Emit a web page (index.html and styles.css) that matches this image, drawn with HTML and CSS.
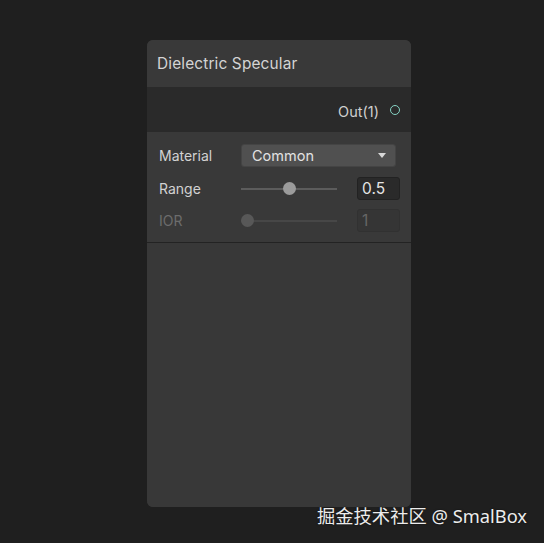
FILE: index.html
```html
<!DOCTYPE html>
<html>
<head>
<meta charset="utf-8">
<link rel="stylesheet" href="styles.css">
</head>
<body>
<div class="node">
  <div class="header"><span class="title">Dielectric Specular</span></div>
  <div class="outputs">
    <span class="port-label">Out(1)</span>
    <span class="port"></span>
  </div>
  <div class="params">
    <div class="row">
      <span class="label">Material</span>
      <div class="dropdown"><span>Common</span><span class="arrow"></span></div>
    </div>
    <div class="row">
      <span class="label">Range</span>
      <div class="slider"><div class="track"></div><div class="thumb" style="left: 50%"></div></div>
      <div class="field">0.5</div>
    </div>
    <div class="row disabled">
      <span class="label">IOR</span>
      <div class="slider"><div class="track"></div><div class="thumb" style="left: 6%"></div></div>
      <div class="field">1</div>
    </div>
  </div>
  <div class="body"></div>
</div>
<div class="watermark">掘金技术社区 @ SmalBox</div>
</body>
</html>
```
FILE: styles.css
```css
html, body {
  margin: 0;
  padding: 0;
}
body {
  width: 544px;
  height: 543px;
  background: #1f1f1f;
  font-family: Inter, "Noto Sans", sans-serif;
  position: relative;
  overflow: hidden;
  padding-top: 40px;
  box-sizing: border-box;
}
.node {
  margin-left: 147px;
  width: 264px;
  height: 467px;
  background: #383838;
  border-radius: 6px;
  overflow: hidden;
  display: flex;
  flex-direction: column;
}
.header {
  height: 47px;
  display: flex;
  align-items: center;
  padding-left: 10px;
  background: #393939;
}
.title {
  font-size: 15.4px;
  color: #d4d4d4;
  letter-spacing: 0.15px;
}
.outputs {
  height: 45px;
  background: #2a2a2a;
  display: flex;
  align-items: center;
  justify-content: flex-end;
  padding-right: 11px;
  gap: 11px;
}
.port-label {
  font-size: 14.5px;
  color: #d0d0d0;
  margin-top: 3px;
}
.port {
  width: 8px;
  height: 8px;
  border: 1.5px solid #86d3c4;
  border-radius: 50%;
}
.params {
  background: #393939;
  padding: 12px 11px 10px 12px;
  display: flex;
  flex-direction: column;
  gap: 10px;
  border-bottom: 1px solid #232323;
}
.row {
  height: 23px;
  display: flex;
  align-items: center;
}
.row.disabled {
  margin-top: -1px;
}
.label {
  width: 82px;
  font-size: 14px;
  color: #d2d2d2;
}
.dropdown {
  width: 155px;
  height: 23px;
  box-sizing: border-box;
  background: #505050;
  border: 1px solid #444;
  border-radius: 3px;
  display: flex;
  align-items: center;
  justify-content: space-between;
  padding: 0 9px 0 10px;
  font-size: 14.5px;
  color: #e2e2e2;
}
.arrow {
  width: 0;
  height: 0;
  border-left: 4.5px solid transparent;
  border-right: 4.5px solid transparent;
  border-top: 5px solid #d8d8d8;
}
.slider {
  position: relative;
  width: 96px;
  height: 14px;
  margin-right: 20px;
}
.track {
  position: absolute;
  left: 0;
  right: 0;
  top: 6px;
  height: 2px;
  background: #5c5c5c;
}
.thumb {
  position: absolute;
  top: 0;
  width: 13px;
  height: 13px;
  margin-left: -6px;
  border-radius: 50%;
  background: #9b9b9b;
}
.field {
  width: 43px;
  height: 23px;
  box-sizing: border-box;
  background: #2a2a2a;
  border: 1px solid #222;
  border-radius: 3px;
  font-size: 15.5px;
  color: #e4e4e4;
  padding-left: 4px;
  display: flex;
  align-items: center;
}
.disabled .label {
  color: #6c6c6c;
}
.disabled .track {
  background: #474747;
}
.disabled .thumb {
  background: #585858;
}
.disabled .field {
  background: #353535;
  border-color: #313131;
  color: #666;
}
.body {
  flex: 1;
  background: #383838;
}
.watermark {
  position: absolute;
  right: 17px;
  bottom: 15px;
  font-family: "Noto Sans", "Noto Sans CJK SC", sans-serif;
  font-size: 18.3px;
  color: #ececec;
  text-shadow: 0 0 2px rgba(0,0,0,0.6);
}
```
